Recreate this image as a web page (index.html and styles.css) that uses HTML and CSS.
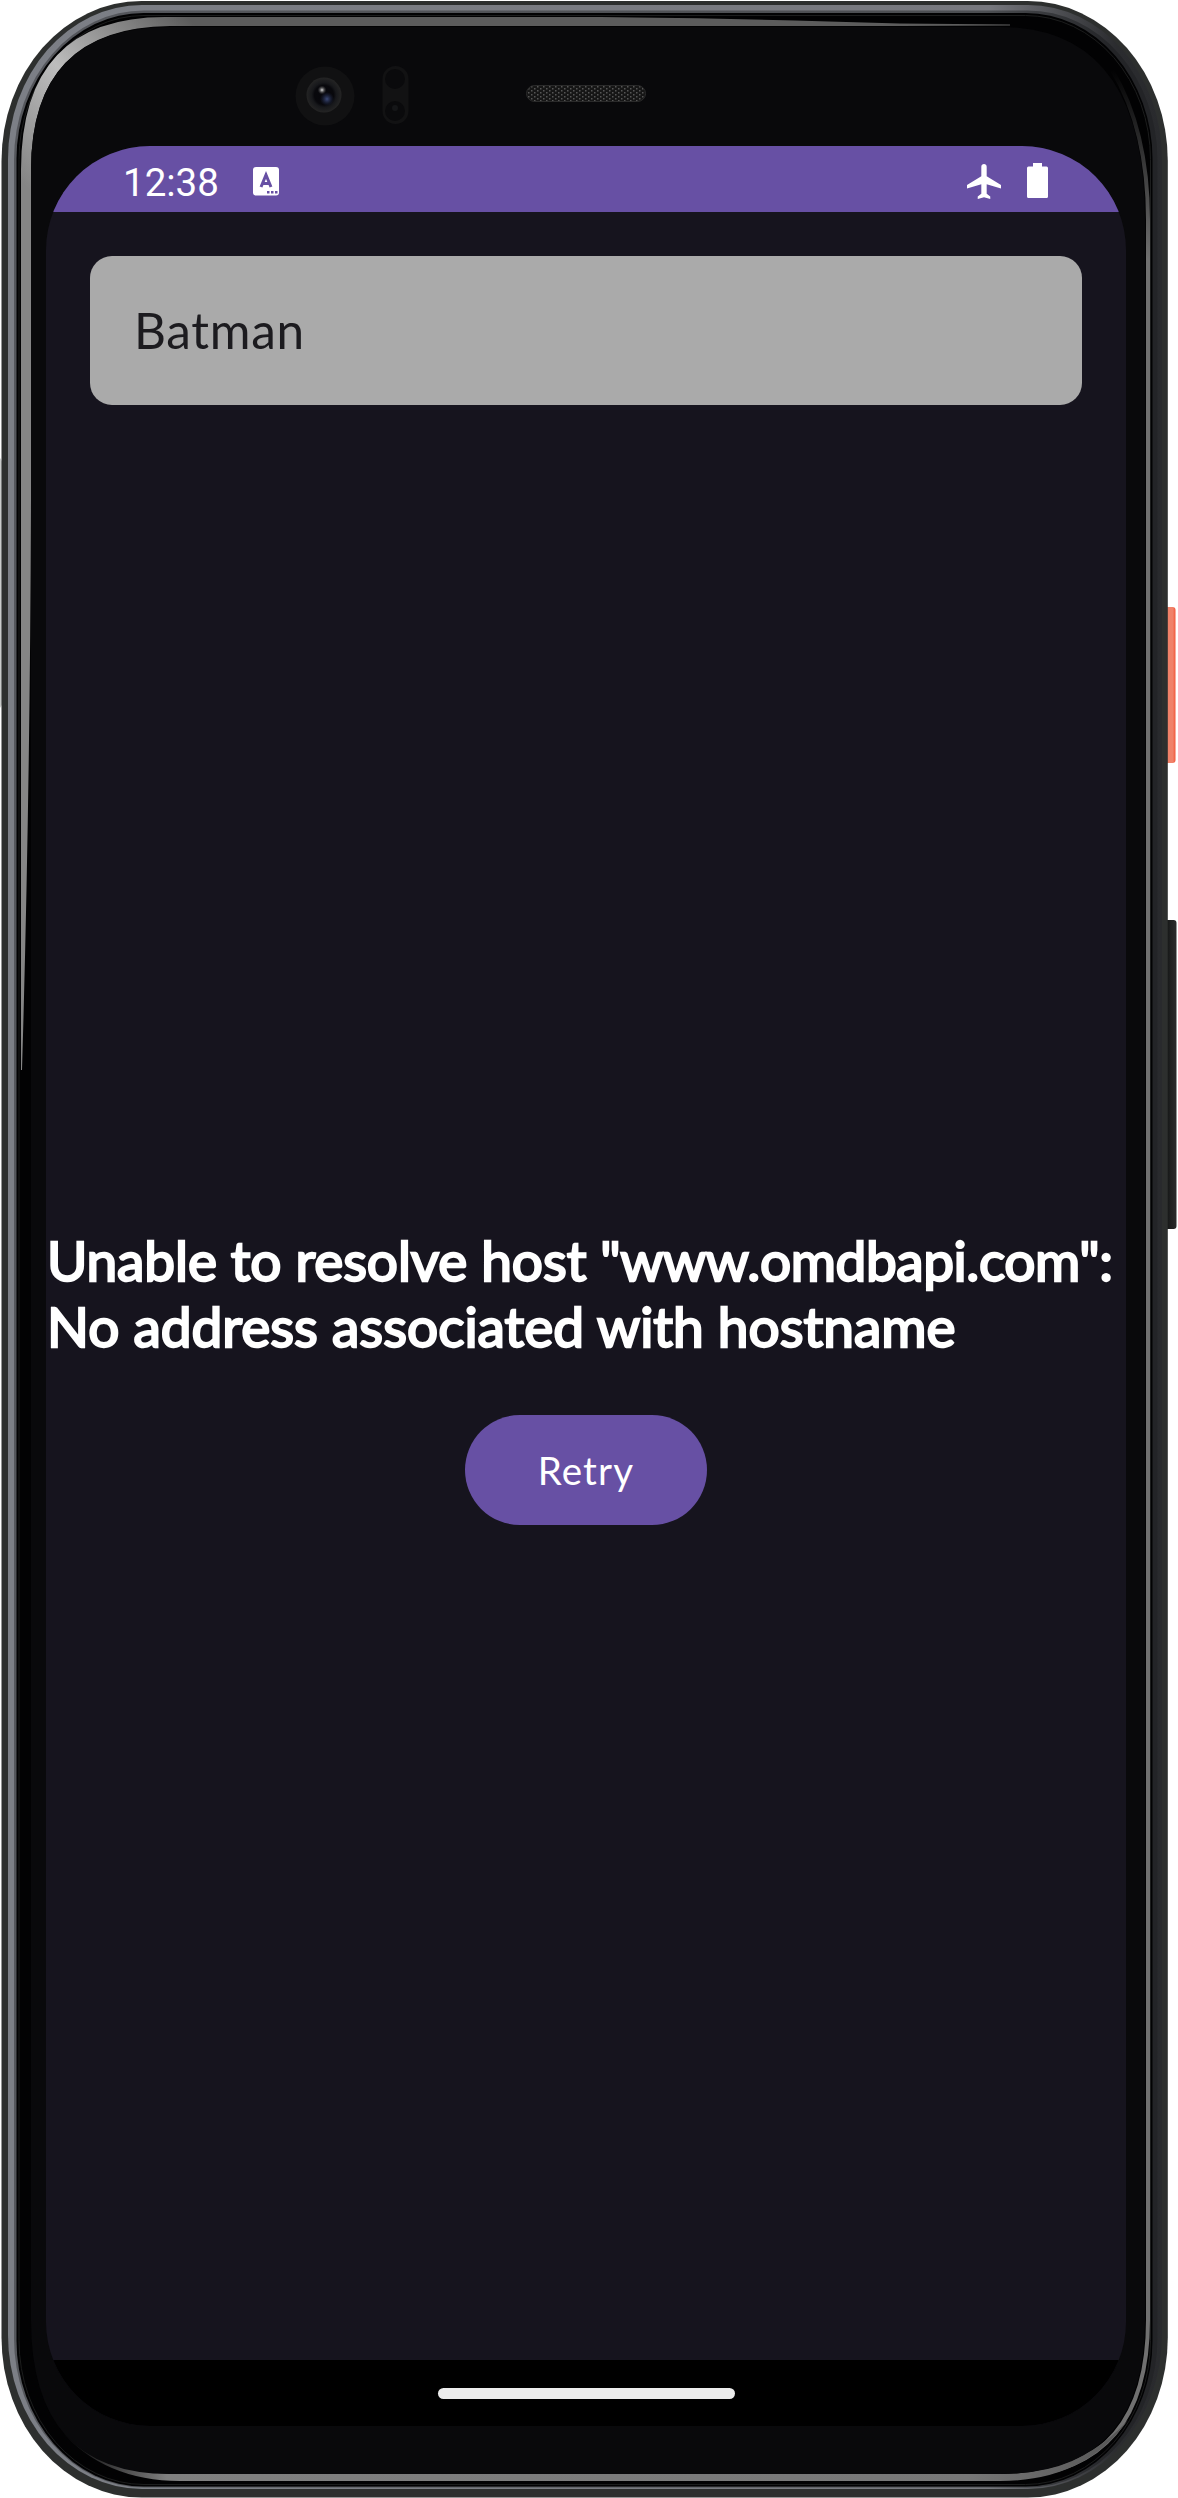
FILE: index.html
```html
<!DOCTYPE html>
<html lang="en">
<head>
<meta charset="utf-8">
<title>Movie search</title>
<link rel="stylesheet" href="styles.css">
</head>
<body>
<div class="device">
  <svg class="shell" width="1178" height="2498" viewBox="0 0 1178 2498" aria-hidden="true">
    <defs>
      <linearGradient id="power" x1="0" x2="1"><stop offset="0" stop-color="#d95f48"/><stop offset=".35" stop-color="#f08168"/><stop offset=".8" stop-color="#f0826a"/><stop offset="1" stop-color="#f2573a"/></linearGradient>
      <linearGradient id="volume" x1="0" x2="1"><stop offset="0" stop-color="#050505"/><stop offset=".5" stop-color="#1c1d1d"/><stop offset="1" stop-color="#2b2b2b"/></linearGradient>
      <linearGradient id="metal" x1="0" x2="1"><stop offset="0" stop-color="#7c7f86"/><stop offset=".85" stop-color="#77787e"/><stop offset=".96" stop-color="#2b2c2f"/><stop offset="1" stop-color="#292a2d"/></linearGradient>
      <linearGradient id="metalDark" x1="0" x2="1"><stop offset="0" stop-color="#55575c"/><stop offset=".85" stop-color="#4c4e52"/><stop offset=".96" stop-color="#232427"/><stop offset="1" stop-color="#232427"/></linearGradient>
      <linearGradient id="shine" gradientUnits="userSpaceOnUse" x1="20" y1="180" x2="190" y2="20"><stop offset="0" stop-color="#858585"/><stop offset=".45" stop-color="#bdbdbd"/><stop offset="1" stop-color="#5c5c5c"/></linearGradient>
      <linearGradient id="bottomShine" x1="0" x2="1"><stop offset="0" stop-color="#777" stop-opacity="0"/><stop offset=".1" stop-color="#808080"/><stop offset=".85" stop-color="#777"/><stop offset="1" stop-color="#555"/></linearGradient>
      <linearGradient id="sideShine" gradientUnits="userSpaceOnUse" x1="0" y1="70" x2="0" y2="260"><stop offset="0" stop-color="#6f6f6f" stop-opacity="0"/><stop offset="1" stop-color="#707070"/></linearGradient>
      <pattern id="mesh" width="6" height="4" patternUnits="userSpaceOnUse"><rect width="6" height="4" fill="#161616"/><path d="M0 0h1.5v1.5H0zM3 2h1.5v1.5H3z" fill="#555"/></pattern>
      <radialGradient id="lens" cx=".5" cy=".5" r=".5"><stop offset="0" stop-color="#07070c"/><stop offset=".55" stop-color="#08080c"/><stop offset=".7" stop-color="#17181b"/><stop offset="1" stop-color="#242424"/></radialGradient>
      <radialGradient id="blue"><stop offset="0" stop-color="#3c4a78"/><stop offset="1" stop-color="#20294a" stop-opacity="0"/></radialGradient>
      <radialGradient id="glint"><stop offset="0" stop-color="#ddd"/><stop offset="1" stop-color="#444" stop-opacity="0"/></radialGradient>
    </defs>
    <path d="M0 458Q4 462 4 480V690Q4 704 0 708Z" fill="#c9cbca"/>
    <rect x="1162" y="607" width="13.5" height="156" rx="3" fill="url(#power)"/>
    <rect x="1162" y="920" width="14.5" height="309" rx="3" fill="url(#volume)"/>
    <rect x="1.5" y="1" width="1166.3" height="2496.5" rx="140" ry="160" fill="#2d2f2e"/>
    <rect x="8" y="5" width="1154" height="2484" rx="134" ry="154" fill="url(#metal)"/>
    <rect x="14" y="10.5" width="1143.500" height="2477" rx="130" ry="149" fill="url(#metalDark)"/>
    <rect x="16.500" y="13" width="1136" height="2473.500" rx="127" ry="146" fill="#020203"/>
    <rect x="19" y="15.500" width="1131.500" height="2469" rx="125" ry="144" fill="none" stroke="#1c1d1d"/>
    <path d="M21 1070L21 170Q21 17 165 17H600Q720 18 900 23.500L1010 24.500V25.500L900 26H170Q31 27 31 170V500Q30 800 22 1070Z" fill="url(#shine)"/>
    <path d="M1112 70Q1148 130 1148 220V2320Q1148 2477 1000 2477.500" fill="none" stroke="url(#sideShine)" stroke-width="4"/>
    <path d="M60 2430Q100 2474 180 2474H1000Q1080 2474 1128 2420Q1085 2481 1000 2481H180Q105 2481 60 2430Z" fill="url(#bottomShine)"/>
    <path d="M31 170Q31 27 170 27H1000Q1145 27 1145 220V2320Q1145 2474 1000 2474H170Q31 2474 31 2320Z" fill="#09090b"/>
    <circle cx="325" cy="96" r="29.500" fill="#111112"/>
    <circle cx="324" cy="95" r="17.500" fill="url(#lens)"/>
    <circle cx="327" cy="99" r="7" fill="url(#blue)"/><circle cx="322" cy="90" r="4.500" fill="url(#glint)"/>
    <rect x="382.500" y="66" width="26" height="58" rx="13" fill="#121213"/><circle cx="395" cy="79" r="10" fill="#0a0a0c"/><circle cx="395" cy="111" r="10" fill="#0a0a0c"/><circle cx="395" cy="108" r="3" fill="#151618"/>
    <rect x="526.500" y="85.500" width="119" height="16" rx="8" fill="url(#mesh)" stroke="#2a2a2a"/>
  </svg>

  <main class="screen">
    <header class="status-bar">
      <div class="status-left">
        <span class="clock">12:38</span>
        <svg width="26" height="29" viewBox="0 0 26 29" aria-hidden="true"><rect width="26" height="28.500" rx="3" fill="#fff"/><path d="M8 20L13 8L18 20M9.800 16.500H16.200" fill="none" stroke="#6750a4" stroke-width="3"/><path d="M14 24h2.500v2.500H14zM18 24h2.500v2.500H18zM22 24h2.500v2.500H22z" fill="#6750a4"/></svg>
      </div>
      <div class="status-right">
        <svg class="plane" width="34" height="35" viewBox="2 2 19 20" preserveAspectRatio="none" aria-hidden="true"><path fill="#fff" d="M21 16v-2l-8-5V3.500c0-.83-.67-1.500-1.500-1.500S10 2.670 10 3.500V9l-8 5v2l8-2.500V19l-2 1.500V22l3.500-1 3.500 1v-1.500L13 19v-5.500l8 2.500z"/></svg>
        <svg class="battery" width="21" height="35" viewBox="0 0 21 35" aria-hidden="true"><path fill="#fff" d="M6 0h9v3.500h4.500Q21 3.500 21 5v28.500q0 1.500-1.500 1.500h-18Q0 35 0 33.500V5q0-1.500 1.500-1.500H6z"/></svg>
      </div>
    </header>
    <section class="content">
      <div class="search">Batman</div>
      <div class="error">
        <p class="message"><span class="lead">Unable to resolve host </span><span class="host">"www.omdbapi.com":</span><br>No address associated with hostname</p>
        <button class="retry" type="button">Retry</button>
      </div>
    </section>
    <footer class="nav-bar"><span class="handle"></span></footer>
  </main>
</div>
</body>
</html>
```
FILE: styles.css
```css
* { box-sizing: border-box; }
body { margin: 0; background: #fff; }
.device {
  position: relative;
  width: 1178px;
  height: 2498px;
  padding: 146px 52px 72px 46px;
  overflow: hidden;
}
.shell { position: absolute; inset: 0; }
.screen {
  position: relative;
  display: flex;
  flex-direction: column;
  width: 1080px;
  height: 2280px;
  border-radius: 104px;
  overflow: hidden;
  background: #16141e;
  color: #fff;
  font-family: Lato, sans-serif;
}
.status-bar {
  display: flex;
  justify-content: space-between;
  height: 66px;
  padding: 0 78px 0 77px;
  background: #6750a4;
}
.status-left { display: flex; align-items: center; gap: 34px; padding-top: 4px; }
.clock { padding-top: 3px; font: 38.500px/44px Roboto, sans-serif; }
.status-right { display: flex; align-items: flex-start; gap: 26px; }
.plane { margin-top: 17.500px; }
.battery { margin-top: 16.500px; }
.content {
  flex: 1;
  display: flex;
  flex-direction: column;
  padding-top: 44px;
}
.search {
  height: 149px;
  margin: 0 44px;
  padding: 0 44px;
  border-radius: 22px;
  background: #aaa;
  color: #1c1b1f;
  font-size: 49.500px;
  line-height: 149px;
  letter-spacing: .7px;
}
.error {
  flex: 1;
  display: flex;
  flex-direction: column;
  align-items: center;
  padding-top: 822px;
}
.message {
  align-self: stretch;
  margin: 0;
  padding-left: 1px;
  font-size: 55px;
  line-height: 66px;
  white-space: nowrap;
  -webkit-text-stroke: 2.300px #fff;
}
.lead { letter-spacing: -.1px; }
.host { letter-spacing: -.42px; }
.retry {
  width: 242px;
  height: 110px;
  margin-top: 56px;
  padding: 0;
  border: 0;
  border-radius: 55px;
  background: #6750a4;
  color: #fff;
  font: 38.500px/110px Lato, sans-serif;
  letter-spacing: 1.200px;
}
.nav-bar {
  display: flex;
  justify-content: center;
  align-items: center;
  height: 66px;
  background: #000;
}
.handle { width: 297px; height: 11px; border-radius: 6px; background: #ececec; }
```
